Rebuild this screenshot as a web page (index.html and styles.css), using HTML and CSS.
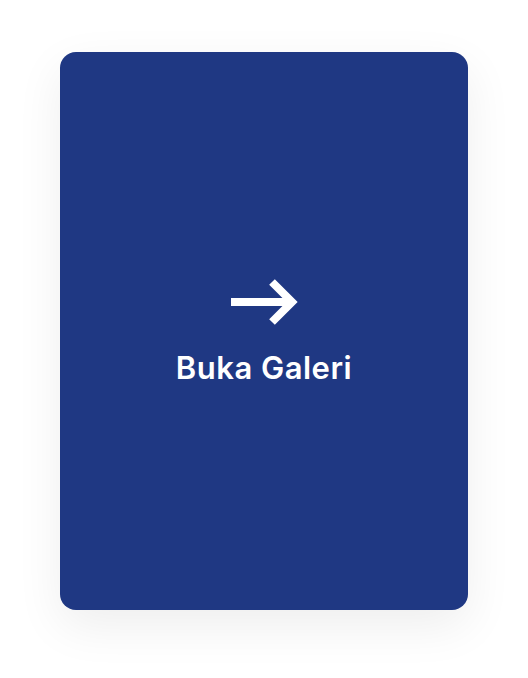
FILE: index.html
```html
<!DOCTYPE html>
<html>
<head>
<meta charset="utf-8">
<link rel="stylesheet" href="styles.css">
</head>
<body>
<div class="page">
  <a class="card" href="#">
    <svg class="arrow" width="68" height="52" viewBox="0 0 68 52" aria-hidden="true">
      <path d="M0 26H60" stroke="#fff" stroke-width="8" fill="none"/>
      <path d="M41 6L61 26L41 46" stroke="#fff" stroke-width="8" fill="none" stroke-linejoin="miter"/>
    </svg>
    <span class="label">Buka Galeri</span>
  </a>
</div>
</body>
</html>
```
FILE: styles.css
```css
* { box-sizing: border-box; }
html, body { margin: 0; padding: 0; background: #ffffff; }
.page {
  width: 528px;
  height: 678px;
  padding: 52px 60px 68px;
  display: flex;
}
.card {
  flex: 1;
  background: #1f3883;
  border-radius: 16px;
  box-shadow: 0 16px 48px rgba(0, 0, 0, 0.07);
  display: flex;
  flex-direction: column;
  align-items: center;
  justify-content: center;
  gap: 22px;
  text-decoration: none;
  color: #fff;
}
.arrow { display: block; margin-left: 1px; }
.label {
  font-family: "Inter", "Noto Sans", sans-serif;
  font-weight: 600;
  font-size: 31px;
  line-height: 36px;
  letter-spacing: 0.5px;
}
```
